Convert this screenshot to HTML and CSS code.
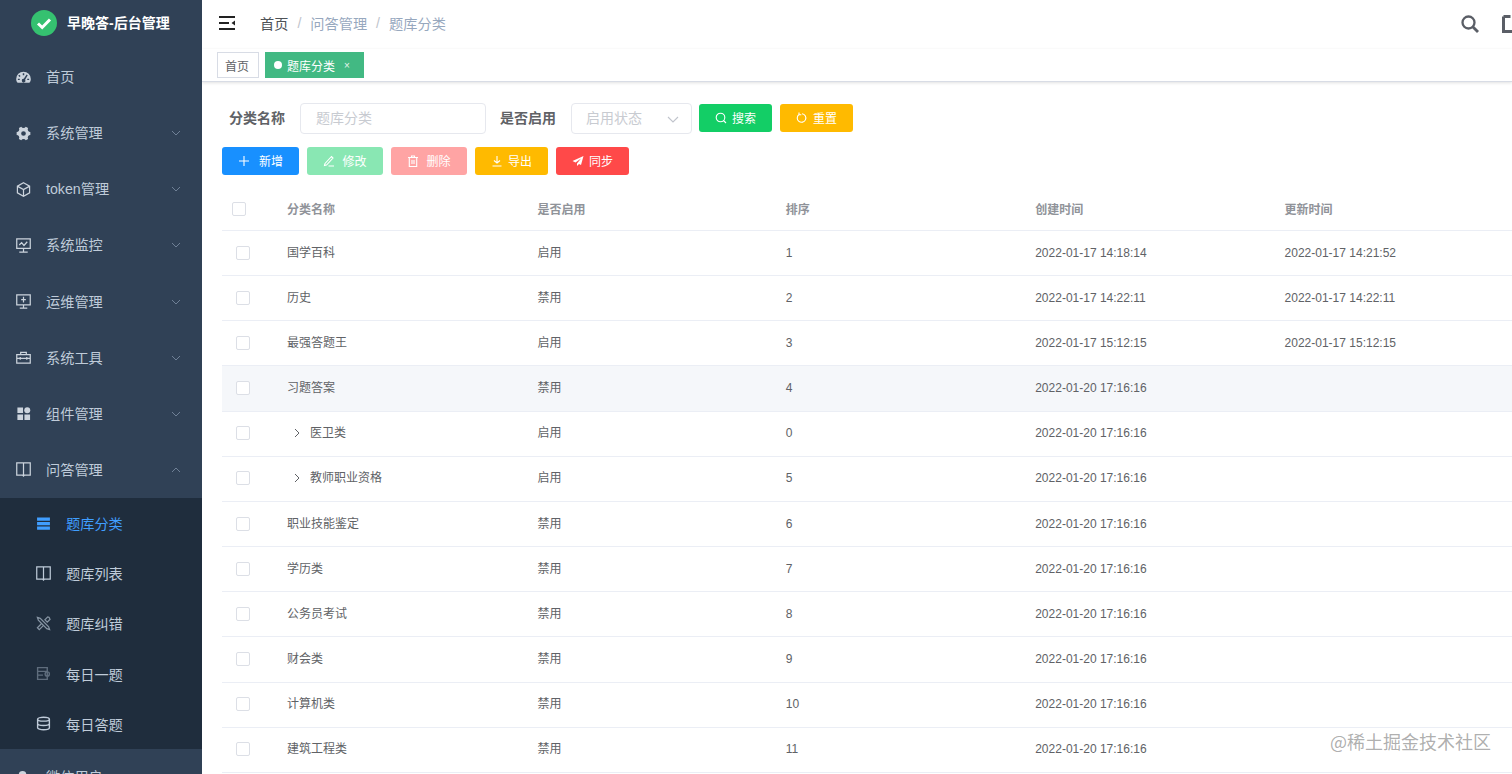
FILE: index.html
```html
<!DOCTYPE html>
<html lang="zh-CN">
<head>
<meta charset="utf-8">
<title>题库分类</title>
<link rel="stylesheet" href="styles.css">
</head>
<body>
<div class="app">
  <aside class="sidebar">
    <div class="logo">
      <svg class="logo-mark" viewBox="0 0 26 26"><circle cx="13" cy="13" r="13" fill="#35c170"/><path d="M7 13.500l4.200 4L19 9.500" fill="none" stroke="#fff" stroke-width="3"/></svg>
      <span class="logo-text">早晚答-后台管理</span>
    </div>
    <nav class="menu">
      <a class="item"><svg class="ico" viewBox="0 0 16 16"><path fill="currentColor" fill-rule="evenodd" d="M8 1.800a7.800 7.800 0 0 0-7.800 7.800c0 1.700.6 3.100 1.500 4.100h12.600c.9-1 1.500-2.400 1.500-4.100A7.800 7.800 0 0 0 8 1.800zM7.200 3.500h1.600v2H7.200zM3.500 5l1.400 1.300-1.100 1.100-1.400-1.300zM2 9.200h2v1.500H2zm10 0h2v1.500h-2zM11.300 4.800l1.200.9-2.800 4.600a1.900 1.900 0 1 1-1.400-.9z"/></svg><span>首页</span></a>
      <a class="item"><svg class="ico" viewBox="0 0 16 16"><path fill="currentColor" fill-rule="evenodd" d="M5.600.8a2.800 2.800 0 0 0 4.800 0l2.500 1.400a2.800 2.800 0 0 0 2.400 4.200v3.200a2.800 2.800 0 0 0-2.400 4.200l-2.500 1.400a2.800 2.800 0 0 0-4.800 0l-2.500-1.400A2.800 2.800 0 0 0 .7 9.600V6.400a2.800 2.800 0 0 0 2.400-4.200zM8 5.500a2.500 2.500 0 1 0 0 5 2.500 2.500 0 0 0 0-5z"/></svg><span>系统管理</span><svg class="chev" viewBox="0 0 10 6"><path d="M1 1l4 4 4-4"/></svg></a>
      <a class="item"><svg class="ico" viewBox="0 0 16 16"><path class="ln" d="M8 .8l6.500 3.700v7L8 15.200l-6.500-3.700v-7zM1.800 4.700L8 8l6.200-3.300M8 8v7"/></svg><span>token管理</span><svg class="chev" viewBox="0 0 10 6"><path d="M1 1l4 4 4-4"/></svg></a>
      <a class="item"><svg class="ico" viewBox="0 0 16 16"><path class="ln" d="M.8 1h14.400v10H.8zM8 11v3.500M3.500 15h9M3.500 7.500l2.500-2.500 2.500 3 3.500-4"/></svg><span>系统监控</span><svg class="chev" viewBox="0 0 10 6"><path d="M1 1l4 4 4-4"/></svg></a>
      <a class="item"><svg class="ico" viewBox="0 0 16 16"><path class="ln" d="M.8 1h14.400v10.500H.8zM8 11.500v3M4 15h8M8 3v6M5.500 6h5"/></svg><span>运维管理</span><svg class="chev" viewBox="0 0 10 6"><path d="M1 1l4 4 4-4"/></svg></a>
      <a class="item"><svg class="ico" viewBox="0 0 16 16"><path class="ln" d="M.8 5h14.400v9H.8zM5 5V2.500h6V5M.8 9h14.400M4.500 7.500v3M11.500 7.500v3"/></svg><span>系统工具</span><svg class="chev" viewBox="0 0 10 6"><path d="M1 1l4 4 4-4"/></svg></a>
      <a class="item"><svg class="ico" viewBox="0 0 16 16"><path fill="currentColor" d="M1.500 1.500h6v6h-6zM1.500 9h6v6h-6zM9 9h6v6H9z"/><circle cx="12" cy="4.500" r="3.200" fill="currentColor"/></svg><span>组件管理</span><svg class="chev" viewBox="0 0 10 6"><path d="M1 1l4 4 4-4"/></svg></a>
      <a class="item"><svg class="ico" viewBox="0 0 16 16"><path class="ln" d="M.8 1h14.400v13H9L8 15l-1-1H.8zM8 1v14"/></svg><span>问答管理</span><svg class="chev" viewBox="0 0 10 6"><path d="M1 5l4-4 4 4"/></svg></a>
      <div class="submenu">
        <a class="sub active"><svg class="ico" viewBox="0 0 14 14"><path fill="currentColor" d="M1 1.500h12v3H1zM1 5.700h12v3H1zM1 9.900h12v3H1z"/></svg><span>题库分类</span></a>
        <a class="sub"><svg class="ico" viewBox="0 0 16 16"><path class="ln" d="M.8 1h14.400v13H9L8 15l-1-1H.8zM8 1v14"/></svg><span>题库列表</span></a>
        <a class="sub tool"><svg class="ico" viewBox="0 0 16 16"><path class="ln" d="M1.500 1.500l3 1 9 9 1 3-3-1-9-9zM14 1.500l-1.500-.5-3 3 2.500 2.500 3-3zM5.500 8.500l-4 4 2 2 4-4"/></svg><span>题库纠错</span></a>
        <a class="sub dim"><svg class="ico" viewBox="0 0 14 14"><path class="ln" d="M1.500 1.500h9v11h-9zM1.500 5h9M1.500 8.500h5M8.500 7.500a2 2 0 1 0 4 0 2 2 0 0 0-4 0z"/></svg><span>每日一题</span></a>
        <a class="sub"><svg class="ico" viewBox="0 0 14 14"><path class="ln" d="M1.500 3c0-1 2.500-1.800 5.500-1.800S12.500 2 12.500 3v8c0 1-2.500 1.800-5.500 1.800S1.500 12 1.500 11zM1.500 3c0 1 2.500 1.800 5.500 1.800S12.500 4 12.500 3M1.500 7c0 1 2.500 1.800 5.500 1.800S12.500 8 12.500 7"/></svg><span>每日答题</span></a>
      </div>
      <a class="item"><svg class="ico" viewBox="0 0 16 16"><circle cx="7" cy="5" r="4" fill="currentColor"/><path fill="currentColor" d="M1 15c0-4 3-6 6-6s6 2 6 6z"/></svg><span>微信用户</span><svg class="chev" viewBox="0 0 10 6"><path d="M1 1l4 4 4-4"/></svg></a>
    </nav>
  </aside>

  <main class="main">
    <header class="navbar">
      <svg class="hamburger" viewBox="0 0 16 14"><path d="M0 1h16M0 7h10M0 13h16" fill="none" stroke="#222" stroke-width="1.800"/><path d="M16 4.500v5L12.500 7z" fill="#222"/></svg>
      <div class="crumbs">
        <span class="crumb-home">首页</span><i>/</i><span>问答管理</span><i>/</i><span>题库分类</span>
      </div>
      <div class="nav-right">
        <svg class="nav-search" viewBox="0 0 18 18"><circle cx="7.500" cy="7.500" r="6" fill="none" stroke="#5a5e66" stroke-width="2.300"/><path d="M12 12l5 5" stroke="#5a5e66" stroke-width="2.800"/></svg>
        <svg class="nav-full" viewBox="0 0 18 18"><path d="M1.500 1.500h7M1.500 1.500v15h15V9M13 2v5M10 4.500h6" fill="none" stroke="#5a5e66" stroke-width="3"/></svg>
      </div>
    </header>

    <div class="tags">
      <span class="tag tag-home">首页</span>
      <span class="tag tag-on"><b class="dot"></b>题库分类<em>×</em></span>
    </div>

    <section class="content">
      <form class="filter">
        <label class="flabel">分类名称</label>
        <div class="field field-name">题库分类</div>
        <label class="flabel flabel-2">是否启用</label>
        <div class="field field-sel">启用状态<svg class="sel-chev" viewBox="0 0 12 7"><path d="M1 1l5 5 5-5"/></svg></div>
        <span class="btn green"><svg viewBox="0 0 12 12"><circle cx="5.500" cy="5.500" r="4.300"/><path d="M8.500 8.500l2.500 2.500"/></svg><span>搜索</span></span>
        <span class="btn amber"><svg viewBox="0 0 12 12"><path d="M3 2.500a4.300 4.300 0 1 0 3-.8M3 .5v2.300h2.300"/></svg><span>重置</span></span>
      </form>
      <div class="tools">
        <span class="btn blue btn-a"><svg viewBox="0 0 12 12"><path d="M6 1v10M1 6h10"/></svg><span>新增</span></span>
        <span class="btn mint btn-w"><svg viewBox="0 0 12 12"><path d="M2 8.500L8.500 1.500l1.500 1.500L3.500 10l-2 .5zM5.500 11H11"/></svg><span>修改</span></span>
        <span class="btn rose btn-w"><svg viewBox="0 0 12 12"><path d="M1 2.500h10M4.500 2.500V1h3v1.500M2.300 2.500v9h7.400v-9M5 5v4M7 5v4"/></svg><span>删除</span></span>
        <span class="btn amber"><svg viewBox="0 0 12 12"><path d="M1.500 11h9M6 1v7M3 5.500L6 8l3-2.500"/></svg><span>导出</span></span>
        <span class="btn red"><svg viewBox="0 0 12 12"><path class="fill" d="M11.500 1L.5 6l3 1.500L9 3.500 5 8.500V11l2-2 2 1z"/></svg><span>同步</span></span>
      </div>

      <div class="table-wrap">
        <table class="grid">
          <colgroup><col class="c0"><col class="cn"><col class="cn"><col class="cn"><col class="cn"><col class="cn"></colgroup>
          <thead><tr><th><i class="check check-h"></i></th><th>分类名称</th><th>是否启用</th><th>排序</th><th>创建时间</th><th>更新时间</th></tr></thead>
          <tbody>
            <tr><td><i class="check"></i></td><td>国学百科</td><td>启用</td><td>1</td><td>2022-01-17 14:18:14</td><td>2022-01-17 14:21:52</td></tr>
            <tr><td><i class="check"></i></td><td>历史</td><td>禁用</td><td>2</td><td>2022-01-17 14:22:11</td><td>2022-01-17 14:22:11</td></tr>
            <tr><td><i class="check"></i></td><td>最强答题王</td><td>启用</td><td>3</td><td>2022-01-17 15:12:15</td><td>2022-01-17 15:12:15</td></tr>
            <tr class="hover"><td><i class="check"></i></td><td>习题答案</td><td>禁用</td><td>4</td><td>2022-01-20 17:16:16</td><td></td></tr>
            <tr><td><i class="check"></i></td><td class="tree"><svg viewBox="0 0 6 10"><path d="M1 1l4 4-4 4"/></svg>医卫类</td><td>启用</td><td>0</td><td>2022-01-20 17:16:16</td><td></td></tr>
            <tr><td><i class="check"></i></td><td class="tree"><svg viewBox="0 0 6 10"><path d="M1 1l4 4-4 4"/></svg>教师职业资格</td><td>启用</td><td>5</td><td>2022-01-20 17:16:16</td><td></td></tr>
            <tr><td><i class="check"></i></td><td>职业技能鉴定</td><td>禁用</td><td>6</td><td>2022-01-20 17:16:16</td><td></td></tr>
            <tr><td><i class="check"></i></td><td>学历类</td><td>禁用</td><td>7</td><td>2022-01-20 17:16:16</td><td></td></tr>
            <tr><td><i class="check"></i></td><td>公务员考试</td><td>禁用</td><td>8</td><td>2022-01-20 17:16:16</td><td></td></tr>
            <tr><td><i class="check"></i></td><td>财会类</td><td>禁用</td><td>9</td><td>2022-01-20 17:16:16</td><td></td></tr>
            <tr><td><i class="check"></i></td><td>计算机类</td><td>禁用</td><td>10</td><td>2022-01-20 17:16:16</td><td></td></tr>
            <tr><td><i class="check"></i></td><td>建筑工程类</td><td>禁用</td><td>11</td><td>2022-01-20 17:16:16</td><td></td></tr>
          </tbody>
        </table>
      </div>
    </section>
  </main>
  <div class="watermark">@稀土掘金技术社区</div>
</div>
</body>
</html>
```
FILE: styles.css
```css
* { box-sizing: border-box; }
html, body { margin: 0; height: 100%; overflow: hidden; }
body { font-family: "Liberation Sans", "Noto Sans CJK SC", sans-serif; background: #fff; color: #606266; }
.app { display: flex; height: 774px; overflow: hidden; position: relative; }

/* sidebar */
.sidebar { flex: 0 0 202px; background: #304156; overflow: hidden; }
.logo { height: 49px; display: flex; align-items: center; padding: 0 0 3px 31px; gap: 10px; }
.logo-mark { width: 26px; height: 26px; }
.logo-text { color: #fff; font-size: 14px; font-weight: 700; margin-top: -2px; }
.item { height: 56.14px; display: flex; align-items: center; padding-left: 16px; color: #bfcbd9; font-size: 14.2px; position: relative; }
.item span { margin-top: -2px; }
.item .ico { width: 15px; height: 15px; margin-right: 15px; color: #ccd4dd; }
.ln { fill: none; stroke: currentColor; stroke-width: 1.300; }
.chev { position: absolute; left: 171px; top: 25px; width: 10px; height: 6px; fill: none; stroke: #6f8096; stroke-width: 1; }
.submenu { background: #1f2d3d; }
.sub { height: 50.2px; display: flex; align-items: center; padding-left: 36px; color: #bfcbd9; font-size: 14.2px; }
.sub .ico { width: 15px; height: 15px; margin-right: 15px; color: #bfcbd9; }
.sub.active, .sub.active .ico { color: #409eff; }
.sub.tool .ico { color: #8795a4; }
.sub.dim .ico { color: #5f6d7d; }

/* main */
.main { flex: 1 1 auto; min-width: 0; overflow: hidden; display: flex; flex-direction: column; }
.navbar { height: 49px; flex: none; display: flex; align-items: center; padding-left: 17px; box-shadow: 0 1px 3px rgba(0,21,41,.08); position: relative; }
.hamburger { width: 16px; height: 14px; margin-top: -3px; }
.crumbs { margin-left: 25px; font-size: 14.2px; color: #97a8be; margin-top: -4px; display: flex; align-items: center; }
.crumbs i { font-style: normal; margin: 0 9px; color: #c0c4cc; }
.crumb-home { color: #4e5257; }
.nav-right { margin-left: auto; display: flex; align-items: center; gap: 23px; margin-right: -8px; margin-top: -2px; flex: none; }
.nav-search { width: 18px; height: 18px; }
.nav-full { width: 18px; height: 18px; }

.tags { height: 33px; flex: none; display: flex; align-items: center; padding: 0 0 0 15px; gap: 6px; background: #fff; border-bottom: 1px solid #d8dce5; box-shadow: 0 1px 3px rgba(0,0,0,.12); position: relative; }
.tag { height: 26px; display: flex; align-items: center; padding: 0 8px 0 7px; font-size: 12px; color: #606266; border: 1px solid #d8dce5; background: #fff; }
.tag-home { width: 42px; }
.tag-on { background: #42b983; border-color: #42b983; color: #fff; width: 99px; padding-left: 8px; }
.dot { width: 8px; height: 8px; border-radius: 50%; background: #fff; margin-right: 5px; }
.tag-on em { font-style: normal; font-size: 10px; margin-left: 9px; color: #e6f5ee; }

.content { padding: 20px 0 0 20px; flex: 1 1 auto; min-width: 0; }
.filter { display: flex; align-items: center; height: 32px; }
.flabel { font-size: 14px; font-weight: 700; color: #606266; width: 78px; padding: 0 0 2px 7px; flex: none; }
.flabel-2 { padding-left: 14px; width: 85px; }
.field { height: 31px; border: 1px solid #e6e8ee; border-radius: 4px; font-size: 14px; color: #c8cbd1; display: flex; align-items: center; padding: 0 0 2px 15px; flex: none; }
.field-name { width: 186px; }
.field-sel { width: 121px; padding-left: 14px; position: relative; }
.sel-chev { position: absolute; right: 12px; top: 12px; width: 12px; height: 7px; fill: none; stroke: #c0c4cc; stroke-width: 1.100; }
.btn { height: 28px; border-radius: 3px; display: inline-flex; align-items: center; justify-content: center; gap: 5px; font-size: 12px; color: #fff; flex: none; width: 73px; }
.btn span { margin-top: -2px; }
.btn svg { width: 12px; height: 12px; fill: none; stroke: #fff; stroke-width: 1.100; }
.btn .fill { fill: #fff; stroke: none; }
.filter .btn { margin-left: 8px; }
.filter .green { margin-left: 7px; }
.green { background: #13ce66; }
.amber { background: #ffba00; }
.blue { background: #1890ff; }
.mint { background: #89e7b3; }
.rose { background: #ffa4a4; }
.red { background: #ff4949; }
.btn-w { width: 76px; gap: 7px; }
.btn-a { width: 77px; gap: 9px; }
.tools { display: flex; gap: 8px; margin-top: 13px; }

.table-wrap { margin-top: 13px; overflow: hidden; }
.grid { table-layout: fixed; width: 1312px; border-collapse: separate; border-spacing: 0; font-size: 12px; }
.c0 { width: 65px; }
.cn { width: 249.33px; }
.grid th { height: 43px; text-align: left; padding: 0 0 1px; font-weight: 700; color: #909399; border-bottom: 1px solid #ebeef5; }
.grid td { height: 45.17px; padding: 0 0 1px; color: #606266; border-bottom: 1px solid #ebeef5; }
.grid td:nth-child(2), .grid td:nth-child(3) { padding-bottom: 4px; }
.grid th:nth-child(3), .grid td:nth-child(3) { padding-left: 1px; }
.hover td { background: #f5f7fa; }
.check { display: block; width: 14px; height: 14px; border: 1px solid #dcdfe6; border-radius: 2px; background: #fff; margin-left: 14px; }
.check-h { margin-left: 10px; }
.tree svg { width: 6px; height: 10px; margin: 0 10px 0 7px; fill: none; stroke: #606266; stroke-width: 1; vertical-align: -1px; }
.watermark { position: absolute; left: 1330px; top: 728px; font-size: 18px; line-height: 26px; color: rgba(130,130,130,.65); font-family: "Noto Sans CJK SC", sans-serif; }
```
